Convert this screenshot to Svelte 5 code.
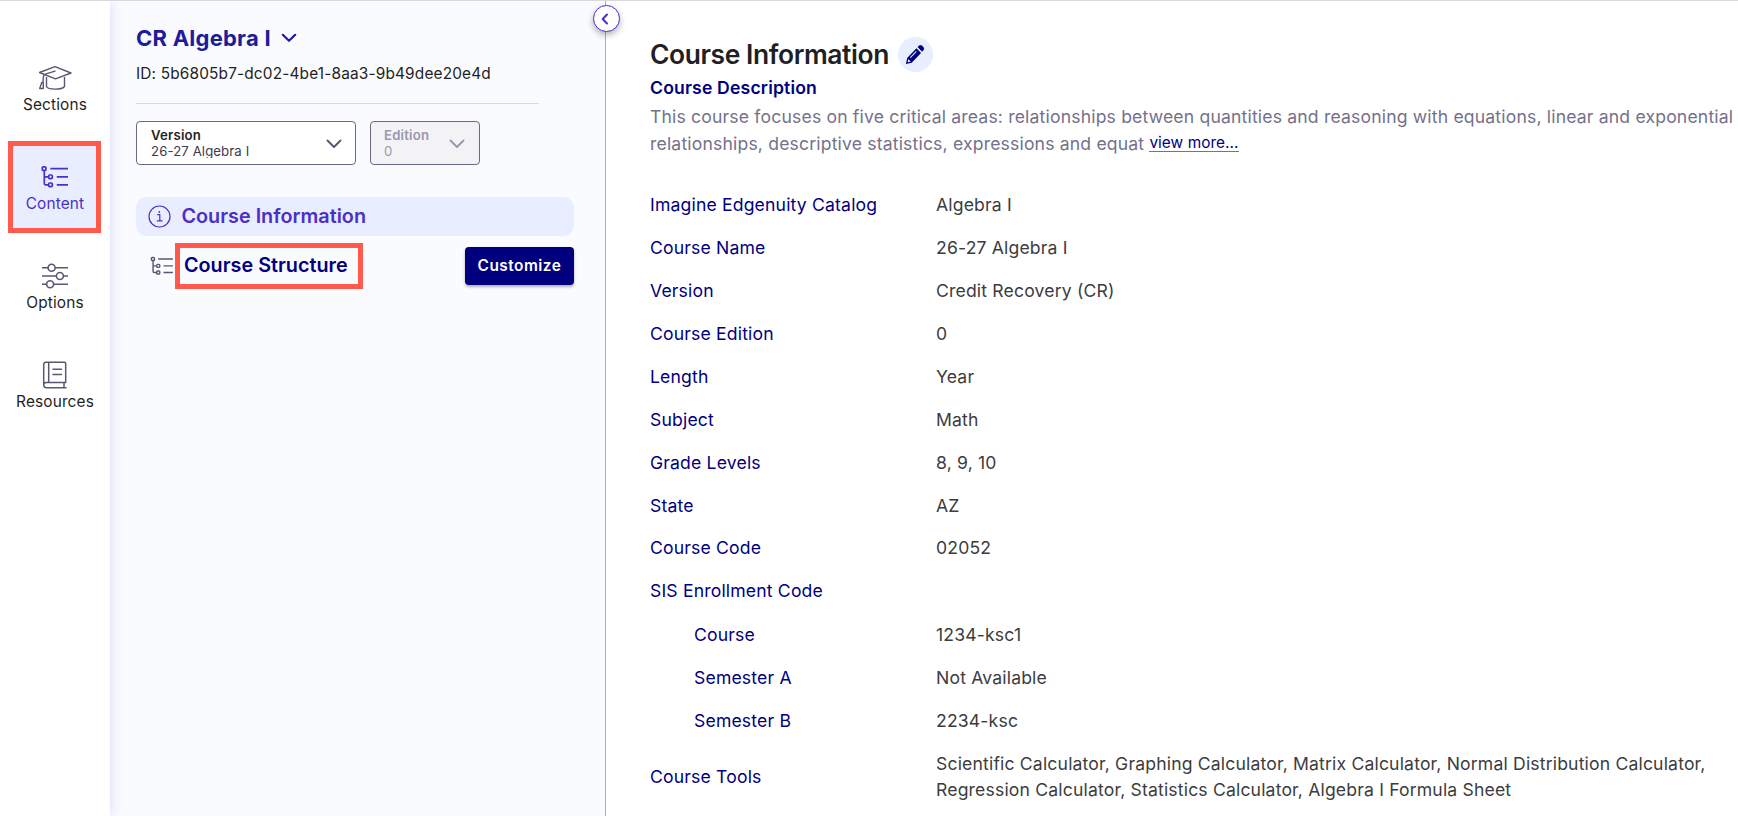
<script>
  const nav = [
    { id: 'sections', label: 'Sections' },
    { id: 'content', label: 'Content' },
    { id: 'options', label: 'Options' },
    { id: 'resources', label: 'Resources' }
  ];
  const rows = [
    ['Imagine Edgenuity Catalog', 'Algebra I'],
    ['Course Name', '26-27 Algebra I'],
    ['Version', 'Credit Recovery (CR)'],
    ['Course Edition', '0'],
    ['Length', 'Year'],
    ['Subject', 'Math'],
    ['Grade Levels', '8, 9, 10'],
    ['State', 'AZ'],
    ['Course Code', '02052'],
    ['SIS Enrollment Code', '']
  ];
  const codes = [
    ['Course', '1234-ksc1'],
    ['Semester A', 'Not Available'],
    ['Semester B', '2234-ksc']
  ];
</script>

{#snippet tree()}
  <svg class="tree" viewBox="0 0 28 24" fill="none" stroke="currentColor" stroke-width="1.7">
    <rect x="1.3" y="1.8" width="3.6" height="3.6" rx="1" />
    <rect x="7.7" y="10" width="3.6" height="3.6" rx="1" />
    <rect x="7.7" y="18" width="3.6" height="3.6" rx="1" />
    <path d="M3.3 5.4V18.6Q3.3 19.8 4.5 19.8H7.7M3.3 11.8H7.7M9.4 3.6H27M15.8 11.8H27M15.8 19.8H27" />
  </svg>
{/snippet}

{#snippet chevron()}
  <svg width="16" height="10" viewBox="0 0 16 10" fill="none" stroke="currentColor" stroke-width="1.9" stroke-linecap="round" stroke-linejoin="round"><path d="M1.5 1.5L8 8L14.5 1.5" /></svg>
{/snippet}

<div class="app">
  <nav class="rail">
    {#each nav as item}
      <a class="item" class:active={item.id === 'content'}>
        {#if item.id === 'sections'}
          <svg width="34" height="26" viewBox="0 0 34 26" fill="none" stroke="currentColor" stroke-width="1.4" stroke-linejoin="round" stroke-linecap="round">
            <path d="M1.5 7.5L17 1.7L33 8L17.5 13.8Z" />
            <path d="M8.5 12.5V21.5C10 25 24 25 26.5 21.5V12.5" />
            <path d="M17 6.2L8 8.8C5.7 9.5 5.2 10.500 5 17.5M3.8 17.5L1.7 23.5H5.3V17.5Z" />
          </svg>
        {:else if item.id === 'content'}
          {@render tree()}
        {:else if item.id === 'options'}
          <svg width="28" height="26" viewBox="0 0 28 26" fill="none" stroke="currentColor" stroke-width="1.6">
            <path d="M1 4.7H7M14.2 4.7H27M1 13H15.3M22.5 13H27M1 21.3H5.5M12.7 21.3H27" />
            <circle cx="10.6" cy="4.7" r="3.5" />
            <circle cx="18.9" cy="13" r="3.5" />
            <circle cx="9.1" cy="21.3" r="3.5" />
          </svg>
        {:else}
          <svg width="26" height="28" viewBox="0 0 26 28" fill="none" stroke="currentColor" stroke-width="1.5" stroke-linejoin="round" stroke-linecap="round">
            <path d="M24 26.7H4A2.7 2.7 0 0 1 1.7 24V3.5A2.2 2.2 0 0 1 4 1.3H22.5A1.2 1.2 0 0 1 23.7 2.5V21.5H4A2.5 2.5 0 0 0 1.7 24M6.7 1.3V21.5M22 21.5V26.7M11 8.3H19.5M11 13.5H19.5" />
          </svg>
        {/if}
        <span>{item.label}</span>
      </a>
    {/each}
  </nav>

  <aside class="panel">
    <h2 class="course">
      CR Algebra I
      <svg width="16" height="10" viewBox="0 0 16 10" fill="none" stroke="currentColor" stroke-width="2.2" stroke-linecap="round" stroke-linejoin="round"><path d="M1.8 1.8L8 7.8L14.2 1.8" /></svg>
    </h2>
    <p class="id">ID: 5b6805b7-dc02-4be1-8aa3-9b49dee20e4d</p>
    <hr />
    <div class="selects">
      <div class="select version">
        <div><b>Version</b><span>26-27 Algebra I</span></div>
        {@render chevron()}
      </div>
      <div class="select edition">
        <div><b>Edition</b><span>0</span></div>
        {@render chevron()}
      </div>
    </div>
    <div class="entry info">
      <svg width="23" height="23" viewBox="0 0 23 23" fill="none" stroke="currentColor" stroke-width="1.2">
        <circle cx="11.5" cy="11.5" r="10.5" />
        <path d="M9.2 9.7H11.8V15.8M8.8 15.9H14.5" />
        <circle cx="11.3" cy="6.9" r=".9" fill="currentColor" stroke="none" />
      </svg>
      <span>Course Information</span>
    </div>
    <div class="entry structure">
      {@render tree()}
      <span class="marked">Course Structure</span>
      <button>Customize</button>
    </div>
    <button class="toggle" aria-label="Collapse panel">
      <svg width="8" height="12" viewBox="0 0 8 12" fill="none" stroke="currentColor" stroke-width="2" stroke-linecap="round" stroke-linejoin="round"><path d="M6 1.5L1.7 6L6 10.5" /></svg>
    </button>
  </aside>

  <main>
    <div class="title">
      <h1>Course Information</h1>
      <span class="edit">
        <svg width="20" height="21" viewBox="0 0 22 22" preserveAspectRatio="none">
          <path fill="currentColor" d="M1 21L2.4 14.600L12.600 4.400L17.600 9.400L7.400 19.600ZM13.800 3.200L15.600 1.500Q17 .4 18.500 1.500L20.500 3.500Q21.600 5 20.500 6.400L18.800 8.200Z" />
          <path d="M5.800 14.300L12.500 7.600" stroke="#e8edff" stroke-width="1.1" />
          <path d="M3.500 15.700L6.300 18.500L3 19Z" fill="#e8edff" />
        </svg>
      </span>
    </div>
    <h3>Course Description</h3>
    <p class="desc">This course focuses on five critical areas: relationships between quantities and reasoning with equations, linear and exponential<br />relationships, descriptive statistics, expressions and equat <a>view more...</a></p>
    <dl>
      {#each rows as [k, v]}
        <div class="row"><dt>{k}</dt><dd>{v}</dd></div>
      {/each}
      <div class="codes">
        {#each codes as [k, v]}
          <div class="row sub"><dt>{k}</dt><dd>{v}</dd></div>
        {/each}
      </div>
      <div class="row tools">
        <dt>Course Tools</dt>
        <dd>Scientific Calculator, Graphing Calculator, Matrix Calculator, Normal Distribution Calculator,<br />Regression Calculator, Statistics Calculator, Algebra I Formula Sheet</dd>
      </div>
    </dl>
  </main>
</div>

<style>
  :global(body) { margin: 0; overflow: hidden; background: #fff; }
  * { box-sizing: border-box; }
  h1, h2, h3, p, dl, dd { margin: 0; }
  svg { display: block; flex: none; }
  .app {
    display: flex;
    height: 816px;
    width: 1738px;
    border-top: 1px solid #d9d8e0;
    overflow: hidden;
    font-family: Inter, "Liberation Sans", sans-serif;
    color: #1f1f24;
  }
  .rail {
    width: 110px;
    flex: none;
    padding: 41px 0 0 8px;
    background: #fff;
    box-shadow: 0 0 12px rgba(80, 80, 200, .2);
    z-index: 1;
    display: flex;
    flex-direction: column;
    gap: 7px;
  }
  .item {
    width: 93px;
    height: 92px;
    border: 5px solid transparent;
    display: grid;
    grid-template-rows: 33px 22px;
    padding-top: 14px;
    justify-items: center;
    align-items: center;
    color: #5a5770;
  }
  .item span { font-size: 15.4px; line-height: 22px; letter-spacing: .15px; color: #1f1f24; padding-left: 1px; }
  .item.active { background: #e8edff; border-color: #ff5a4b; color: #4b2fc9; }
  .item.active span { color: #4b2fc9; }
  .tree { width: 28px; height: 24px; }
  .panel {
    position: relative;
    width: 496px;
    flex: none;
    padding: 21px 31px 0 26px;
    background: #fafbff;
    border-right: 1px solid #a9b0bf;
  }
  .course {
    display: flex;
    align-items: center;
    gap: 10px;
    height: 32px;
    font-size: 22px;
    font-weight: 700;
    line-height: 32px;
    letter-spacing: .24px;
    color: #1c1c9c;
  }
  .id { margin-top: 9px; font-size: 15.4px; line-height: 22px; letter-spacing: .165px; }
  hr { width: 403px; margin: 18px 0 17px; border: 0; border-top: 1px solid #d9d9df; }
  .selects { display: flex; gap: 14px; }
  .select {
    height: 44px;
    border: 1px solid #6b6885;
    border-radius: 4px;
    background: #fff;
    padding: 5px 13px 0 14px;
    display: flex;
    justify-content: space-between;
    font-size: 13.2px;
    letter-spacing: .1px;
    color: #5a5770;
  }
  .select b, .select span { display: block; line-height: 16px; }
  .select b { font-weight: 600; letter-spacing: .2px; color: #1f1f24; }
  .select span { color: #3c3a4c; height: 15px; overflow: hidden; }
  .select :global(svg) { margin-top: 12px; }
  .version { width: 220px; }
  .edition { width: 110px; padding: 5px 14px 0 13px; background: #f3f3f6; color: #9a97ae; }
  .edition b, .edition span { color: #9a97ae; }
  .entry { display: flex; align-items: center; font-size: 19.8px; font-weight: 600; }
  .info {
    margin-top: 32px;
    height: 39px;
    padding: 0 0 0 11.5px;
    gap: 11px;
    border-radius: 11px;
    background: #e8edff;
    color: #4b2fc9;
  }
  .info span { padding-bottom: 2px; }
  .structure { margin-top: 7px; height: 46px; padding-left: 14px; color: #5a5770; }
  .structure :global(.tree) { width: 24px; height: 20px; margin-right: 1px; }
  .marked { border: 5px solid #ff5a4b; width: 188px; height: 46px; padding-left: 4px; line-height: 35px; color: #00007f; }
  .structure button {
    margin: 0 0 0 auto;
    width: 109px;
    height: 38px;
    border: 0;
    border-radius: 4px;
    background: #00007f;
    color: #fff;
    font: 600 15.4px/38px Inter, sans-serif;
    letter-spacing: .5px;
    padding: 0;
    box-shadow: 0 2px 3px rgba(0, 0, 0, .3);
  }
  .toggle {
    position: absolute;
    right: -14.5px;
    top: 4px;
    width: 27px;
    height: 27px;
    padding: 0 2px 0 0;
    border: 1px solid #4b2fc9;
    border-radius: 50%;
    background: #fff;
    color: #4b2fc9;
    display: flex;
    align-items: center;
    justify-content: center;
    box-shadow: 0 3px 6px rgba(0, 0, 0, .3);
  }
  main { flex: 1; min-width: 0; padding: 34px 0 0 44px; }
  .title { display: flex; align-items: center; gap: 9px; height: 38px; }
  h1 { font-size: 26.4px; font-weight: 600; line-height: 38px; letter-spacing: -.4px; }
  .edit {
    width: 35px;
    height: 35px;
    padding-right: 1px;
    border-radius: 50%;
    background: #e8edff;
    color: #00007f;
    display: flex;
    align-items: center;
    justify-content: center;
  }
  h3 { margin-top: 1px; font-size: 17.6px; font-weight: 600; line-height: 28px; letter-spacing: .17px; color: #00007f; }
  .desc { margin-top: 1px; font-size: 17.6px; line-height: 27px; height: 54px; letter-spacing: .165px; color: #74718a; white-space: nowrap; }
  .desc a { font-size: 15.4px; letter-spacing: .05px; color: #00007f; position: relative; top: -2.5px; border-bottom: 1px solid #6f6fb8; display: inline-block; line-height: 17px; }
  dl { margin-top: 27px; font-size: 17.6px; letter-spacing: .165px; }
  .row { display: grid; grid-template-columns: 286px 1fr; align-items: center; height: 42.9px; line-height: 26.2px; }
  dt { color: #00007f; }
  dd { color: #3c3c3e; white-space: nowrap; }
  .codes { margin-top: 1px; }
  .sub dt { padding-left: 44px; }
  .tools { height: 69px; }
</style>
